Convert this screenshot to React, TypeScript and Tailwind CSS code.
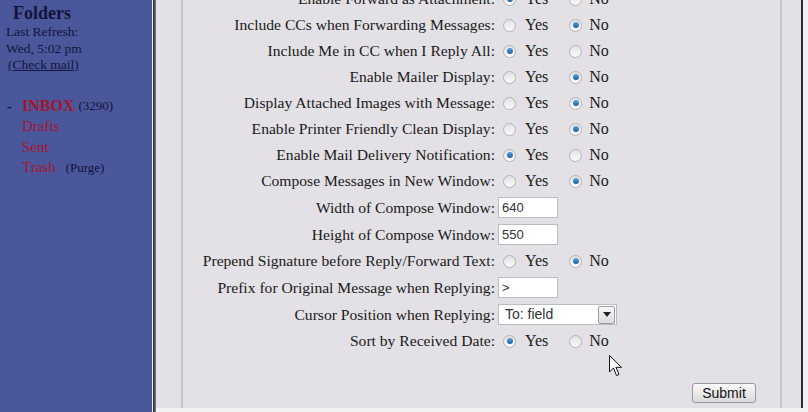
import React from "react";

type Row =
  | { label: string; kind: "radio"; yes: boolean }
  | { label: string; kind: "input"; value: string }
  | { label: string; kind: "select"; value: string };

const rows: Row[] = [
  { label: "Enable Forward as Attachment:", kind: "radio", yes: true },
  { label: "Include CCs when Forwarding Messages:", kind: "radio", yes: false },
  { label: "Include Me in CC when I Reply All:", kind: "radio", yes: true },
  { label: "Enable Mailer Display:", kind: "radio", yes: false },
  { label: "Display Attached Images with Message:", kind: "radio", yes: false },
  { label: "Enable Printer Friendly Clean Display:", kind: "radio", yes: false },
  { label: "Enable Mail Delivery Notification:", kind: "radio", yes: true },
  { label: "Compose Messages in New Window:", kind: "radio", yes: false },
  { label: "Width of Compose Window:", kind: "input", value: "640" },
  { label: "Height of Compose Window:", kind: "input", value: "550" },
  { label: "Prepend Signature before Reply/Forward Text:", kind: "radio", yes: false },
  { label: "Prefix for Original Message when Replying:", kind: "input", value: ">" },
  { label: "Cursor Position when Replying:", kind: "select", value: "To: field" },
  { label: "Sort by Received Date:", kind: "radio", yes: true },
];

function Radio({ checked }: { checked: boolean }) {
  return (
    <span className="flex h-[13px] w-[13px] items-center justify-center rounded-full border border-[#b4b4b8] bg-gradient-to-b from-[#e2e2e4] to-[#fbfbfb]">
      {checked && (
        <span className="h-[6px] w-[6px] rounded-full bg-gradient-to-b from-[#5aa7dc] to-[#1c5f9a]" />
      )}
    </span>
  );
}

export default function App() {
  const serif = { fontFamily: '"Liberation Serif", "Times New Roman", serif' };
  return (
    <div
      className="relative flex h-[412px] w-[808px] overflow-hidden bg-[#e3e1e5] text-[#1a1a1a]"
      style={serif}
    >
      {/* Sidebar */}
      <div className="flex h-full w-[152px] shrink-0 flex-col bg-[#4b579b] text-[#12143a]">
        <div className="pl-[13px] pt-[3px] text-[18px] font-bold leading-[20px]">Folders</div>
        <div className="mt-[1px] pl-[6px] text-[13.5px] leading-[16.5px]">Last Refresh:</div>
        <div className="pl-[6px] text-[13.5px] leading-[16.5px]">Wed, 5:02 pm</div>
        <div className="pl-[8px] text-[13.5px] leading-[16.5px]">
          <span className="underline">(Check mail)</span>
        </div>
        <div className="mt-[22px] flex flex-col">
          <div className="flex h-[20.5px] items-center">
            <span className="w-[22px] pl-[7px] text-[15px] font-bold">-</span>
            <span className="text-[16px] font-bold text-[#a3162d]">INBOX</span>
            <span className="ml-[4px] text-[13px]">(3290)</span>
          </div>
          <div className="flex h-[20.5px] items-center pl-[22px] text-[15px] text-[#a3162d]">Drafts</div>
          <div className="flex h-[20.5px] items-center pl-[22px] text-[15px] text-[#a3162d]">Sent</div>
          <div className="flex h-[20.5px] items-center pl-[22px]">
            <span className="text-[15px] text-[#a3162d]">Trash</span>
            <span className="ml-[10px] text-[13px]">(Purge)</span>
          </div>
        </div>
      </div>
      {/* Frame border */}
      <div className="h-full w-[1px] shrink-0 bg-[#eef0f6]" />
      <div className="h-full w-[3px] shrink-0 bg-gradient-to-r from-[#2a2a36] via-[#4a4a58] to-[#8a8a94]" />
      {/* Main */}
      <div className="flex h-full flex-1 flex-col">
        <div className="flex h-[408px]">
          <div className="w-[25px] shrink-0 bg-[#e2e0e4]" />
          <div className="w-[2px] shrink-0 bg-[#c7c5ca]" />
          <div className="flex w-[597px] shrink-0 flex-col bg-[#e3e1e5]">
            <div className="mt-[-14px] flex flex-col">
              {rows.map((r, i) => (
                <div
                  key={i}
                  className={`flex items-center ${r.kind === "radio" ? "h-[26px]" : "h-[27px]"}`}
                >
                  <div className="w-[312px] shrink-0 text-right text-[15.6px] leading-[20px]">
                    {r.label}
                  </div>
                  {r.kind === "radio" && (
                    <div className="ml-[3px] flex items-center text-[16px] leading-[20px]">
                      <span className="ml-[5px]">
                        <Radio checked={r.yes} />
                      </span>
                      <span className="ml-[9px]">Yes</span>
                      <span className="ml-[21px]">
                        <Radio checked={!r.yes} />
                      </span>
                      <span className="ml-[7px]">No</span>
                    </div>
                  )}
                  {r.kind === "input" && (
                    <div
                      className="ml-[3px] flex h-[21px] w-[60px] items-center border border-[#bdbcc0] bg-white pl-[3px] text-[13px] text-[#333]"
                      style={{ fontFamily: '"Liberation Sans", Arial, sans-serif' }}
                    >
                      {r.value}
                    </div>
                  )}
                  {r.kind === "select" && (
                    <div
                      className="ml-[3px] flex h-[21px] w-[119px] items-center border border-[#bdbcc0] bg-white text-[14px] text-[#333]"
                      style={{ fontFamily: '"Liberation Sans", Arial, sans-serif' }}
                    >
                      <span className="flex-1 pl-[6px]">{r.value}</span>
                      <span className="mr-[1px] flex h-[18px] w-[17px] items-center justify-center rounded-[2px] border border-[#9c9ca0] bg-gradient-to-b from-[#f8f8f8] to-[#dcdcdc]">
                        <svg width="8" height="5" viewBox="0 0 8 5">
                          <path d="M0 0 H8 L4 5 Z" fill="#222" />
                        </svg>
                      </span>
                    </div>
                  )}
                </div>
              ))}
            </div>
            <div className="mt-[29px] flex justify-end pr-[24px]">
              <button
                className="flex h-[20px] w-[64px] items-center justify-center rounded-[3px] border border-[#9a9a9e] bg-gradient-to-b from-[#fafafa] to-[#d9d9dc] text-[14px] text-[#111]"
                style={{ fontFamily: '"Liberation Sans", Arial, sans-serif' }}
              >
                Submit
              </button>
            </div>
          </div>
          <div className="w-[2px] shrink-0 bg-[#c7c5ca]" />
          <div className="w-[19px] shrink-0 bg-[#e3e1e5]" />
          <div className="w-[2px] shrink-0 bg-[#2c2c34]" />
          <div className="flex-1 bg-[#f2f2f4]" />
        </div>
        <div className="h-[4px] bg-[#f2f2f4]" />
      </div>
      {/* Mouse cursor */}
      <svg
        className="absolute left-[609px] top-[355px]"
        width="14"
        height="22"
        viewBox="0 0 14 22"
      >
        <path
          d="M0.5 0.5 L0.5 17 L4.5 13 L7.5 20.5 L10 19.5 L7 12.3 L12.5 12.3 Z"
          fill="#fff"
          stroke="#111"
          strokeWidth="1"
          strokeLinejoin="round"
        />
      </svg>
    </div>
  );
}
